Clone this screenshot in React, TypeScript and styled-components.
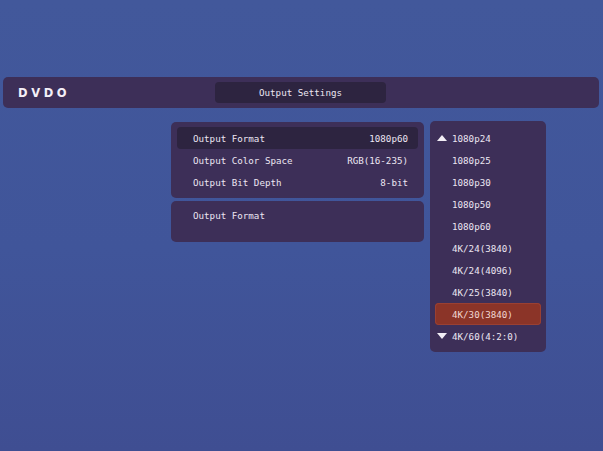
import React from 'react'
import styled, { createGlobalStyle } from 'styled-components'

const GlobalStyle = createGlobalStyle`
  html, body {
    margin: 0;
    padding: 0;
  }
  body {
    font-family: 'DejaVu Sans Mono', 'Liberation Mono', monospace;
  }
`

const Screen = styled.div`
  width: 603px;
  height: 451px;
  box-sizing: border-box;
  padding-top: 77px;
  background: linear-gradient(180deg, #42589b 0%, #40559a 55%, #3f4e92 100%);
  overflow: hidden;
`

const Header = styled.div`
  display: flex;
  align-items: center;
  height: 31px;
  margin: 0 4px 0 3px;
  padding-left: 15px;
  background: #3d2f58;
  border-radius: 5px;
`

const Logo = styled.div`
  width: 197px;
  font-family: 'DejaVu Sans', Verdana, sans-serif;
  font-weight: 700;
  font-size: 11.5px;
  letter-spacing: 3.6px;
  color: #f4f0f8;
`

const TitleBox = styled.div`
  width: 171px;
  height: 21px;
  display: flex;
  align-items: center;
  justify-content: center;
  background: #2d2440;
  border-radius: 4px;
  color: #ece6f2;
  font-size: 9.2px;
`

const Content = styled.div`
  display: flex;
  align-items: flex-start;
  gap: 6px;
  padding-left: 171px;
  margin-top: 13px;
`

const Column = styled.div`
  display: flex;
  flex-direction: column;
  gap: 3px;
  width: 253px;
  margin-top: 1px;
`

const Panel = styled.div<{ $pad: number; $height?: number }>`
  box-sizing: border-box;
  background: #3d2f58;
  border-radius: 5px;
  padding: ${p => p.$pad}px 6px;
  ${p => (p.$height ? `height: ${p.$height}px;` : '')}
`

const Row = styled.div<{ $active?: boolean }>`
  display: flex;
  align-items: center;
  justify-content: space-between;
  height: 22px;
  padding: 0 10px 0 16px;
  border-radius: 4px;
  background: ${p => (p.$active ? '#2d2440' : 'transparent')};
  color: #ece6f2;
  font-size: 9.2px;
`

const ListPanel = styled.div`
  box-sizing: border-box;
  width: 116px;
  padding: 6px 5px 5px;
  background: #3d2f58;
  border-radius: 5px;
`

const Item = styled.div<{ $active?: boolean }>`
  display: grid;
  grid-template-columns: 15px 1fr;
  align-items: center;
  height: 22px;
  padding-left: 2px;
  border-radius: 4px;
  font-size: 9.2px;
  color: ${p => (p.$active ? '#f1d6d2' : '#ece6f2')};
  background: ${p => (p.$active ? '#8b3428' : 'transparent')};
  box-shadow: ${p => (p.$active ? 'inset 0 0 0 1px #9a4032' : 'none')};
`

const Arrow = styled.svg`
  display: block;
`

const rows = [
  { label: 'Output Format', value: '1080p60', active: true },
  { label: 'Output Color Space', value: 'RGB(16-235)' },
  { label: 'Output Bit Depth', value: '8-bit' },
]

const formats = [
  '1080p24',
  '1080p25',
  '1080p30',
  '1080p50',
  '1080p60',
  '4K/24(3840)',
  '4K/24(4096)',
  '4K/25(3840)',
  '4K/30(3840)',
  '4K/60(4:2:0)',
]

function App() {
  return (
    <Screen>
      <GlobalStyle />
      <Header>
        <Logo>DVDO</Logo>
        <TitleBox>Output Settings</TitleBox>
      </Header>
      <Content>
        <Column>
          <Panel $pad={5}>
            {rows.map(row => (
              <Row key={row.label} $active={row.active}>
                <span>{row.label}</span>
                <span>{row.value}</span>
              </Row>
            ))}
          </Panel>
          <Panel $pad={3} $height={41}>
            <Row>
              <span>Output Format</span>
            </Row>
          </Panel>
        </Column>
        <ListPanel>
          {formats.map((f, i) => (
            <Item key={f} $active={f === '4K/30(3840)'}>
              <span>
                {i === 0 && (
                  <Arrow width="10" height="6" viewBox="0 0 10 6">
                    <path d="M0 6 L5 0 L10 6 Z" fill="#f2eef6" />
                  </Arrow>
                )}
                {i === formats.length - 1 && (
                  <Arrow width="10" height="6" viewBox="0 0 10 6">
                    <path d="M0 0 L10 0 L5 6 Z" fill="#f2eef6" />
                  </Arrow>
                )}
              </span>
              <span>{f}</span>
            </Item>
          ))}
        </ListPanel>
      </Content>
    </Screen>
  )
}

export default App
